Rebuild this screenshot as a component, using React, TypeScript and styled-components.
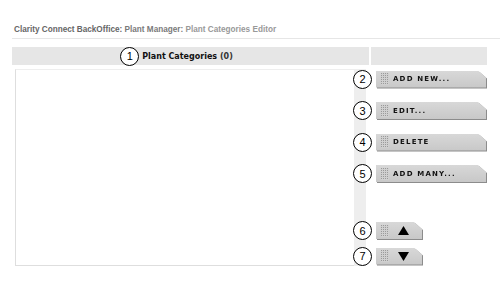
import styled, { createGlobalStyle } from "styled-components";

const GlobalStyle = createGlobalStyle`
  html, body {
    margin: 0;
    padding: 0;
    background: #ffffff;
  }
`;

const actions = [
  { n: 2, label: "ADD NEW..." },
  { n: 3, label: "EDIT..." },
  { n: 4, label: "DELETE" },
  { n: 5, label: "ADD MANY..." },
];

const movers = [
  { n: 6, dir: "up" },
  { n: 7, dir: "down" },
];

export default function App() {
  return (
    <Page>
      <GlobalStyle />
      <Title>
        <Crumb $tone="#666666">Clarity Connect BackOffice: </Crumb>
        <Crumb $tone="#7a7a7a">Plant Manager: </Crumb>
        <Crumb $tone="#999999">Plant Categories Editor</Crumb>
      </Title>
      <HeadRow>
        <HeadCell $w={357} $shift={28}>
          <Marker>1</Marker>
          <HeadText>
            Plant Categories <Count>(0)</Count>
          </HeadText>
        </HeadCell>
        <HeadCell $w={116} $shift={0} />
      </HeadRow>
      <BodyRow>
        <ListBox />
        <Strip />
        <Actions>
          {actions.map((a) => (
            <ActionRow key={a.n}>
              <Marker>{a.n}</Marker>
              <ButtonWrap>
                <Button $w={110}>
                  <Grip />
                  <Label>{a.label}</Label>
                </Button>
              </ButtonWrap>
            </ActionRow>
          ))}
          <Spacer />
          {movers.map((m) => (
            <ActionRow key={m.n} $tight>
              <Marker>{m.n}</Marker>
              <ButtonWrap>
                <Button $w={46}>
                  <Grip />
                  <Arrow>
                    <svg width="11" height="9" viewBox="0 0 11 9">
                      {m.dir === "up" ? (
                        <polygon points="5.5,0 11,9 0,9" fill="#000" />
                      ) : (
                        <polygon points="0,0 11,0 5.5,9" fill="#000" />
                      )}
                    </svg>
                  </Arrow>
                </Button>
              </ButtonWrap>
            </ActionRow>
          ))}
        </Actions>
      </BodyRow>
    </Page>
  );
}

const Page = styled.div`
  width: 500px;
  height: 285px;
  padding-left: 12px;
  box-sizing: border-box;
  overflow: hidden;
  font-family: "Liberation Sans", Arial, sans-serif;
`;

const Title = styled.div`
  padding-top: 24px;
  padding-left: 2px;
  height: 14px;
  line-height: 12px;
  font-size: 8.2px;
  font-weight: bold;
  border-bottom: 1px solid #e6e6e6;
  white-space: nowrap;
`;

const Crumb = styled.span<{ $tone: string }>`
  color: ${(p) => p.$tone};
`;

const HeadRow = styled.div`
  display: flex;
  gap: 2px;
  margin-top: 8px;
  height: 18px;
`;

const HeadCell = styled.div<{ $w: number; $shift: number }>`
  width: ${(p) => p.$w}px;
  flex: none;
  background: #e6e6e6;
  display: flex;
  align-items: center;
  justify-content: center;
  gap: 3px;
  padding-right: ${(p) => p.$shift}px;
  box-sizing: border-box;
`;

const HeadText = styled.span`
  font-family: "DejaVu Sans", Verdana, sans-serif;
  font-weight: bold;
  font-size: 8px;
  color: #111;
`;

const Count = styled.span`
  font-weight: bold;
  color: #333;
`;

const Marker = styled.div`
  width: 19px;
  height: 19px;
  border: 1.3px solid #000;
  border-radius: 50%;
  background: #fff;
  box-sizing: border-box;
  display: flex;
  align-items: center;
  justify-content: center;
  font-family: "Liberation Sans", Arial, sans-serif;
  font-size: 11px;
  color: #000;
  flex: none;
`;

const BodyRow = styled.div`
  display: flex;
  margin-top: 4px;
  padding-left: 3px;
  height: 197px;
`;

const ListBox = styled.div`
  width: 338px;
  flex: none;
  border: 1px solid #dedede;
  border-top-color: #eeeeee;
  border-right: none;
  background: #fff;
`;

const Strip = styled.div`
  width: 12px;
  flex: none;
  background: #eeeeee;
`;

const Actions = styled.div`
  display: flex;
  flex-direction: column;
  margin-left: -13px;
  padding-top: 1px;
  gap: 13.5px;
`;

const ActionRow = styled.div<{ $tight?: boolean }>`
  display: flex;
  align-items: center;
  gap: 4px;
  height: 18px;
  margin-bottom: ${(p) => (p.$tight ? "-6px" : "0")};
`;

const Spacer = styled.div`
  height: 12px;
`;

const ButtonWrap = styled.div`
  filter: drop-shadow(1px 1px 0 #8c8c8c);
`;

const Button = styled.div<{ $w: number }>`
  width: ${(p) => p.$w}px;
  height: 17px;
  display: flex;
  align-items: center;
  background: linear-gradient(#d8d8d8, #c8c8c8);
  clip-path: polygon(0 0, calc(100% - 8px) 0, 100% 7px, 100% 100%, 0 100%);
`;

const Grip = styled.div`
  width: 8px;
  height: 12px;
  margin-left: 5px;
  background-color: #9a9a9a;
  background-image: linear-gradient(90deg, transparent 1px, #d0d0d0 1px),
    linear-gradient(transparent 1px, #d0d0d0 1px);
  background-size: 2px 2px, 2px 2px;
  flex: none;
`;

const Label = styled.span`
  margin-left: 4px;
  font-family: "DejaVu Sans", Verdana, sans-serif;
  font-weight: bold;
  font-size: 7px;
  letter-spacing: 1.2px;
  color: #111;
  white-space: nowrap;
`;

const Arrow = styled.div`
  margin-left: 9px;
  display: flex;
`;
